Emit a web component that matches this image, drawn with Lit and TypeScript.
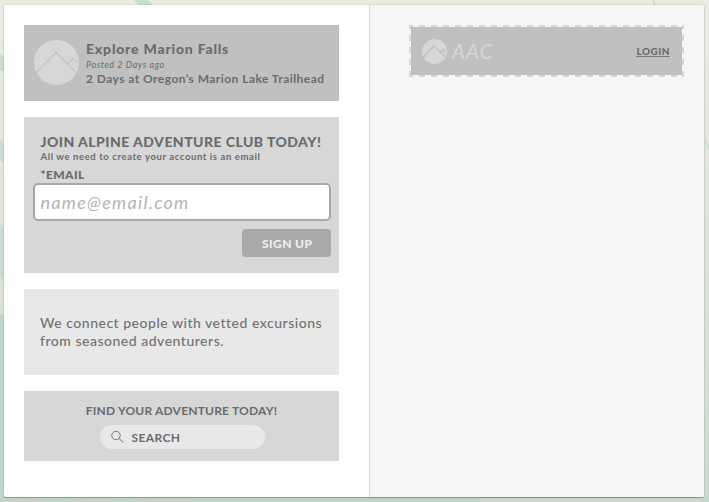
import { LitElement, html, css, svg } from "lit";
import { customElement, property } from "lit/decorators.js";

@customElement("mountain-logo")
class MountainLogo extends LitElement {
  @property({ type: Number }) stroke = 1.3;
  static styles = css`
    :host { display: block; flex: none; }
    svg { display: block; width: 100%; height: 100%; }
  `;
  render() {
    return html`<svg viewBox="0 0 45 45" fill="none">
      <circle cx="22.5" cy="22.5" r="22.5" fill="#d7d7d7"></circle>
      <path d="M2 33 L22 12.5 L41.5 32 M33.5 24 L38.7 18.8 L43.5 22.5" stroke="#c3c3c3" stroke-width=${this.stroke}></path>
    </svg>`;
  }
}

@customElement("app-root")
class AppRoot extends LitElement {
  static styles = css`
    * { box-sizing: border-box; }
    :host {
      box-sizing: border-box;
      display: block;
      width: 709px;
      height: 502px;
      position: relative;
      overflow: hidden;
      padding: 5px 5px 5px 4px;
      font-family: Lato, "Liberation Sans", sans-serif;
      color: #6b6b6b;
      white-space: nowrap;
    }
    .map { position: absolute; left: 0; top: 0; width: 709px; height: 502px; }
    .window {
      position: relative;
      display: flex;
      height: 492px;
      background: #fff;
      border-radius: 2px;
      overflow: hidden;
    }
    .frame {
      position: relative;
      border-radius: 2px;
      box-shadow: 0 1px 1px #7f9a8b, 0 0 2px rgba(90, 105, 95, 0.35);
    }
    .left {
      width: 366px;
      padding: 20px 30px 0 20px;
      border-right: 1px solid #d9d9d9;
      display: flex;
      flex-direction: column;
      gap: 16px;
    }
    .right { flex: 1; background: #f6f6f6; padding: 20px 20px 0 39px; }
    .card { background: #d7d7d7; }
    .post { height: 76px; background: #c0c0c0; display: flex; padding: 15px 0 0 10px; gap: 7px; }
    .post mountain-logo { width: 45px; height: 45px; }
    .title { font-size: 14px; line-height: 18px; font-weight: 900; letter-spacing: 0.8px; }
    .posted { font-size: 9px; line-height: 14px; font-style: italic; letter-spacing: 0.57px; }
    .place { font-size: 12px; line-height: 14px; font-weight: 700; letter-spacing: 0.45px; }
    .join { height: 156px; padding: 16px 8px 0 9px; }
    .head { font-size: 14px; line-height: 17px; font-weight: 900; letter-spacing: 0.45px; padding-left: 7.5px; }
    .hint { font-size: 9.5px; line-height: 13px; font-weight: 700; letter-spacing: 0.6px; padding-left: 7.5px; }
    .label { font-size: 12px; line-height: 20px; font-weight: 900; letter-spacing: 0.4px; padding: 2px 0 0 7.5px; height: 22px; }
    .mail {
      height: 38px;
      width: 298px;
      margin-top: -2px;
      border: 2px solid #a8a8a8;
      border-radius: 5px;
      background: #fff;
      color: #b4b4b4;
      font-size: 18px;
      line-height: 34px;
      font-style: italic;
      letter-spacing: 1.27px;
      padding-left: 5.5px;
    }
    .signup {
      width: 89px;
      height: 28px;
      margin: 8px 0 0 209px;
      border-radius: 4px;
      background: #a9a9a9;
      color: #ededed;
      font-size: 12px;
      line-height: 29px;
      font-weight: 900;
      letter-spacing: 0.4px;
      padding-left: 20px;
    }
    .about { height: 86px; background: #e8e8e8; color: #727272; padding: 25px 0 0 16px; font-size: 14px; line-height: 18px; font-weight: 500; letter-spacing: 0.51px; }
    .find { height: 70px; padding-top: 12px; display: flex; flex-direction: column; align-items: center; }
    .findhead { font-size: 12px; line-height: 16px; font-weight: 700; letter-spacing: 0.2px; }
    .search {
      margin: 6px 0 0 1px;
      width: 165px;
      height: 24px;
      border-radius: 12px;
      background: #e8e8e8;
      display: flex;
      align-items: center;
      padding-left: 11px;
      gap: 7px;
      font-size: 12px;
      font-weight: 700;
      letter-spacing: 0.4px;
    }
    .search svg { display: block; width: 14px; height: 14px; }
    .nav {
      position: relative;
      width: 275px;
      height: 52px;
      padding: 2px;
    }
    .dashes { position: absolute; left: 0; top: 0; width: 275px; height: 52px; }
    .bar { position: relative; height: 48px; background: #c0c0c0; display: flex; align-items: center; padding: 0 12px 0 11px; }
    .bar mountain-logo { width: 25px; height: 25px; }
    .brand { margin-left: 5px; font-size: 20.5px; line-height: 24px; font-style: italic; letter-spacing: 1.1px; color: #d7d7d7; flex: 1; }
    .login { font-size: 10px; line-height: 13px; font-weight: 900; letter-spacing: 0.5px; border-bottom: 1px solid #7c7c7c; height: 12px; margin-bottom: 1px; }
  `;

  render() {
    return html`
      <svg class="map" viewBox="0 0 709 502">
        <defs>
          <linearGradient id="ground" x1="0" y1="0" x2="0" y2="1">
            <stop offset="0" stop-color="#ebebe2"></stop>
            <stop offset="0.4" stop-color="#e1e5db"></stop>
            <stop offset="0.8" stop-color="#d3dfd4"></stop>
            <stop offset="1" stop-color="#c8d9cd"></stop>
          </linearGradient>
        </defs>
        <rect width="709" height="502" fill="url(#ground)"></rect>
        ${svg`<path d="M134 0h13l6 5h-14z M0 53l4 5v13h-4z M0 139l4 5v20l-4-4z M0 224l4 5v50h-4z" fill="#c9ddd0"></path>
        <path d="M0 315h4v187h-4z M4 498h476v4h-476z" fill="#bdd6c8"></path>
        <path d="M10 498h30v4h-34z M68 498h45l-4 4h-41z M134 498h56v4h-58z" fill="#c8d1c6"></path>
        <path d="M653 0l2 5M705 140l4 9" stroke="#c9ddd0" stroke-width="1.5"></path>`}
      </svg>
      <div class="frame"><div class="window">
        <div class="left">
          <div class="card post">
            <mountain-logo></mountain-logo>
            <div>
              <div class="title">Explore Marion Falls</div>
              <div class="posted">Posted 2 Days ago</div>
              <div class="place">2 Days at Oregon’s Marion Lake Trailhead</div>
            </div>
          </div>
          <div class="card join">
            <div class="head">JOIN ALPINE ADVENTURE CLUB TODAY!</div>
            <div class="hint">All we need to create your account is an email</div>
            <div class="label">*EMAIL</div>
            <div class="mail">name@email.com</div>
            <div class="signup">SIGN UP</div>
          </div>
          <div class="card about">We connect people with vetted excursions<br />from seasoned adventurers.</div>
          <div class="card find">
            <div class="findhead">FIND YOUR ADVENTURE TODAY!</div>
            <div class="search">
              <svg viewBox="0 0 14 14" fill="none" stroke="#777" stroke-width="1"><circle cx="5" cy="5.5" r="4.2"></circle><path d="M8 8.5l4.5 4"></path></svg>
              <span>SEARCH</span>
            </div>
          </div>
        </div>
        <div class="right">
          <div class="nav">
            <svg class="dashes" viewBox="0 0 275 52" fill="none" stroke="#d6d6d6" stroke-width="2">
              <path d="M0 1H275M0 51H275" stroke-dasharray="6 6" stroke-dashoffset="2"></path>
              <path d="M1 0V52M274 0V52" stroke-dasharray="6 6" stroke-dashoffset="2"></path>
            </svg>
            <div class="bar">
              <mountain-logo .stroke=${3}></mountain-logo>
              <span class="brand">AAC</span>
              <span class="login">LOGIN</span>
            </div>
          </div>
        </div>
      </div></div>
    `;
  }
}
